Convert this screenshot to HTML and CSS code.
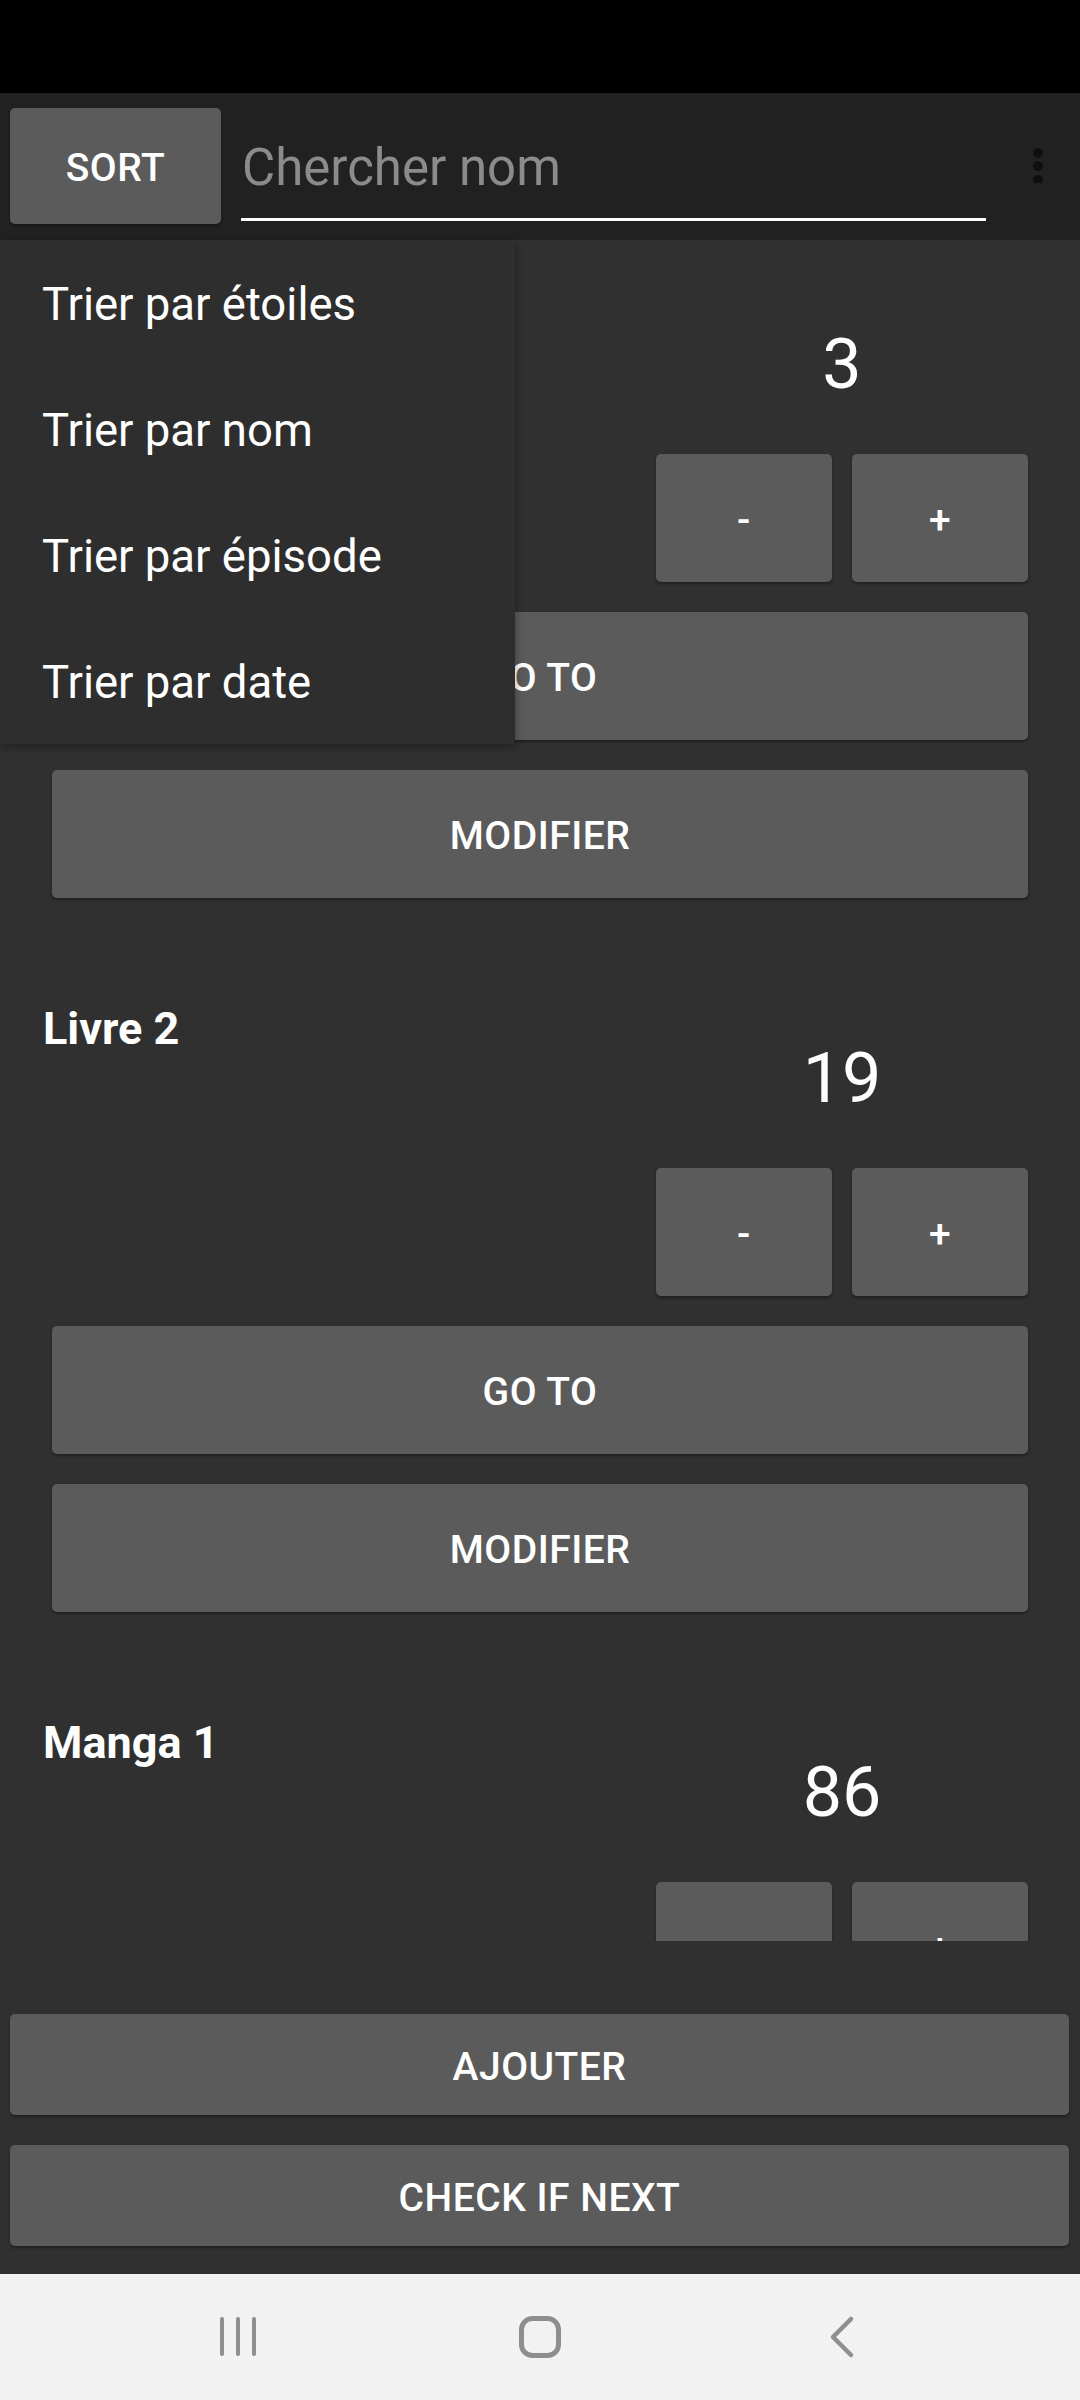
FILE: index.html
```html
<!DOCTYPE html>
<html lang="fr">
<head>
<meta charset="utf-8">
<title>Liste</title>
<link rel="stylesheet" href="styles.css">
</head>
<body>
<div class="screen">
  <div class="status"></div>
  <div class="toolbar">
    <div class="btn sort">SORT</div>
    <div class="search">
      <div class="placeholder">Chercher nom</div>
      <div class="underline"></div>
    </div>
    <svg class="overflow" width="20" height="40" viewBox="0 0 20 40">
      <circle cx="10" cy="10" r="5" fill="#0f0f0f"/>
      <circle cx="10" cy="23" r="5" fill="#0f0f0f"/>
      <circle cx="10" cy="37" r="5" fill="#0f0f0f"/>
    </svg>
  </div>
  <div class="main">
    <div class="list">
      <div class="item">
        <div class="row">
          <div class="title">Livre 1</div>
          <div class="side">
            <div class="count">3</div>
            <div class="pm">
              <div class="btn small">-</div>
              <div class="btn small">+</div>
            </div>
          </div>
        </div>
        <div class="btn wide gap">GO TO</div>
        <div class="btn wide gap">MODIFIER</div>
      </div>
      <div class="item">
        <div class="row">
          <div class="title">Livre 2</div>
          <div class="side">
            <div class="count">19</div>
            <div class="pm">
              <div class="btn small">-</div>
              <div class="btn small">+</div>
            </div>
          </div>
        </div>
        <div class="btn wide gap">GO TO</div>
        <div class="btn wide gap">MODIFIER</div>
      </div>
      <div class="item">
        <div class="row">
          <div class="title">Manga 1</div>
          <div class="side">
            <div class="count">86</div>
            <div class="pm">
              <div class="btn small">-</div>
              <div class="btn small">+</div>
            </div>
          </div>
        </div>
        <div class="btn wide gap">GO TO</div>
        <div class="btn wide gap">MODIFIER</div>
      </div>
    </div>
    <div class="menu">
      <div class="menu-item">Trier par étoiles</div>
      <div class="menu-item">Trier par nom</div>
      <div class="menu-item">Trier par épisode</div>
      <div class="menu-item">Trier par date</div>
    </div>
  </div>
  <div class="bottom">
    <div class="btn full">AJOUTER</div>
    <div class="btn full">CHECK IF NEXT</div>
  </div>
  <div class="nav">
    <svg class="nav-icon" width="60" height="60" viewBox="0 0 60 60">
      <g stroke="#8e8e8e" stroke-width="4" stroke-linecap="round">
        <line x1="14" y1="12" x2="14" y2="47"/>
        <line x1="30" y1="12" x2="30" y2="47"/>
        <line x1="46" y1="12" x2="46" y2="47"/>
      </g>
    </svg>
    <svg class="nav-icon" width="60" height="60" viewBox="0 0 60 60">
      <rect x="11.5" y="11.5" width="37" height="37" rx="11" fill="none" stroke="#8e8e8e" stroke-width="5"/>
    </svg>
    <svg class="nav-icon" width="60" height="60" viewBox="0 0 60 60">
      <polyline points="39,12 21,30 39,48" fill="none" stroke="#8e8e8e" stroke-width="4.5" stroke-linecap="round" stroke-linejoin="round"/>
    </svg>
  </div>
</div>
</body>
</html>
```

FILE: styles.css
```css
* { box-sizing: border-box; }

html, body {
  margin: 0;
  padding: 0;
  background: #303030;
}

body {
  font-family: Roboto, "Noto Sans", "Liberation Sans", sans-serif;
  color: #ffffff;
}

.screen {
  width: 1080px;
  height: 2400px;
  display: flex;
  flex-direction: column;
  background: #303030;
  overflow: hidden;
}

.status {
  height: 93px;
  background: #000000;
  flex: none;
}

.toolbar {
  height: 147px;
  flex: none;
  background: #212121;
  display: flex;
  align-items: flex-start;
}

.btn {
  background: #5b5b5c;
  border-radius: 5px;
  color: #ffffff;
  font-weight: 500;
  font-size: 39px;
  letter-spacing: 0.5px;
  display: flex;
  align-items: center;
  justify-content: center;
  padding-top: 4px;
  box-shadow: 0 2px 3px rgba(0, 0, 0, 0.35);
}

.sort {
  margin-top: 15px;
  margin-left: 10px;
  width: 211px;
  height: 116px;
}

.search {
  margin-left: 20px;
  width: 745px;
  margin-top: 45px;
  display: flex;
  flex-direction: column;
}

.placeholder {
  font-size: 51px;
  line-height: 60px;
  color: #8b8b8b;
  padding-left: 1px;
}

.underline {
  margin-top: 20px;
  height: 3px;
  background: #ffffff;
}

.overflow {
  margin-left: 42px;
  margin-top: 50px;
  flex: none;
}

.main {
  position: relative;
  height: 1701px;
  flex: none;
}

.list {
  height: 1701px;
  overflow: hidden;
  padding-top: 48px;
}

.item {
  height: 714px;
  display: flex;
  flex-direction: column;
}

.row {
  display: flex;
}

.title {
  flex: 1;
  padding-left: 43px;
  font-size: 45px;
  font-weight: 700;
  line-height: 53px;
}

.side {
  width: 372px;
  margin-right: 52px;
  padding-top: 35px;
  display: flex;
  flex-direction: column;
}

.count {
  text-align: center;
  font-size: 70px;
  line-height: 82px;
  font-weight: 400;
}

.pm {
  margin-top: 49px;
  display: flex;
  gap: 20px;
}

.small {
  width: 176px;
  height: 128px;
}

.wide {
  margin-left: 52px;
  margin-right: 52px;
  height: 128px;
}

.gap {
  margin-top: 30px;
}

.menu {
  position: absolute;
  top: 0;
  left: 0;
  width: 515px;
  background: #2e2e2e;
  border-radius: 0 0 4px 0;
  box-shadow: 1px 3px 8px rgba(0, 0, 0, 0.3);
  display: flex;
  flex-direction: column;
}

.menu-item {
  height: 126px;
  display: flex;
  align-items: center;
  padding-left: 42px;
  padding-top: 3px;
  font-size: 45.5px;
  color: #ffffff;
}

.bottom {
  flex: none;
  height: 333px;
  padding: 73px 11px 0 10px;
  display: flex;
  flex-direction: column;
  gap: 30px;
}

.full {
  height: 101px;
}

.nav {
  flex: none;
  height: 126px;
  background: #f2f2f2;
  display: flex;
  align-items: center;
  justify-content: center;
  gap: 242px;
}

.nav-icon {
  flex: none;
}
```
